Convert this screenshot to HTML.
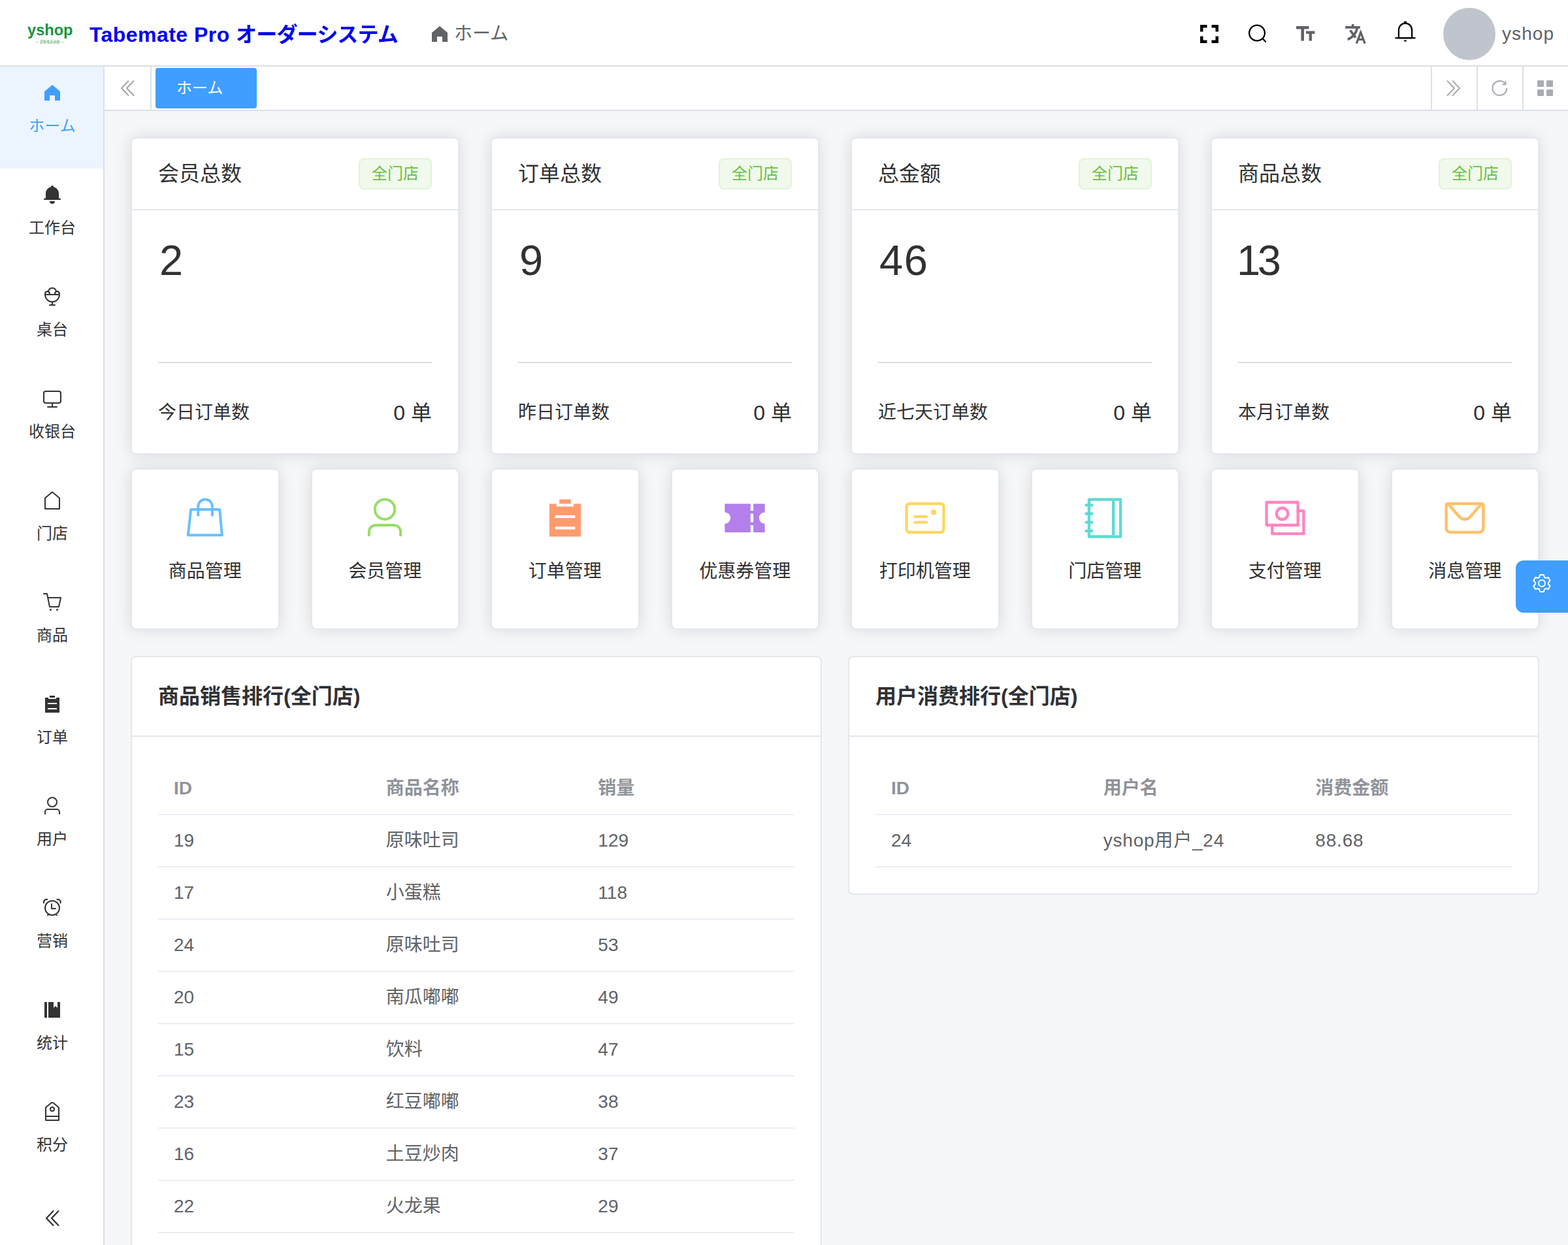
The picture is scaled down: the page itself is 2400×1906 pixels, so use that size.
<!DOCTYPE html>
<html lang="zh-CN">
<head>
<meta charset="utf-8">
<title>Tabemate Pro オーダーシステム</title>
<style>
*{box-sizing:border-box;margin:0;padding:0}
html,body{width:2400px;height:1906px;overflow:hidden}
body{position:relative;background:#f5f7f9;font-family:"Liberation Sans","Noto Sans CJK SC","Noto Sans CJK JP",sans-serif;color:#303133;-webkit-font-smoothing:antialiased}
svg{display:block}
.abs{position:absolute}
/* header */
#hdr{position:absolute;left:0;top:0;width:2400px;height:102px;background:#fff;border-bottom:2px solid #dcdfe6}
#logo{position:absolute;left:40px;top:28px;width:74px;height:44px;color:#17953f}
#logo .l1{position:absolute;left:1.700px;top:2.700px;font-size:24.500px;line-height:30px;font-weight:700;transform:scaleX(.964);transform-origin:0 0;white-space:nowrap}
#logo .l2{position:absolute;left:13.500px;top:33px;font-size:10.400px;line-height:12px;transform:scale(.5);transform-origin:0 0;white-space:nowrap;opacity:.85}
#title{position:absolute;left:137px;top:31px;font-size:32px;line-height:44px;font-weight:700;color:#0000ee;white-space:nowrap}
#crumb{position:absolute;left:657px;top:30px;height:44px;display:flex;align-items:center;color:#606266;font-size:28px;line-height:44px;white-space:nowrap}
#crumb svg{margin-right:6px}
.hi{position:absolute;top:0}
#avatar{position:absolute;left:2209px;top:12px;width:80px;height:80px;border-radius:50%;background:#c0c4cc}
#uname{position:absolute;left:2299px;top:30px;font-size:28px;line-height:44px;color:#606266;letter-spacing:1.100px}
/* sidebar */
#side{position:absolute;left:0;top:102px;width:160px;height:1804px;background:#fff;border-right:2px solid #dcdfe6}
.mi{position:absolute;left:0;width:158px;height:156px;color:#333}
.mi.on{background:#ecf5ff;color:#409eff}
.mi svg{position:absolute;left:64px;top:24px;width:32px;height:32px;fill:currentColor}
.mi span{position:absolute;left:1px;top:73px;width:158px;text-align:center;font-size:24px;line-height:36px}
/* tagbar */
#tags{position:absolute;left:160px;top:102px;width:2240px;height:68px;background:#fff;border-bottom:2px solid #dcdfe6}
.tb{position:absolute;top:0;height:66px;border-left:2px solid #dcdfe6}
#tab{position:absolute;left:78px;top:2px;width:155px;height:62px;border-radius:4px;background:#409eff;color:#fff;font-size:24px;line-height:62px;padding-left:32px}
/* cards */
.card{position:absolute;background:#fff;border:2px solid #e4e7ed;border-radius:8px;box-shadow:0 0 24px rgba(0,0,0,.12)}
.card.ns{box-shadow:none}
.c1{top:210px;width:503px;height:486px}
.c1 .hd{position:absolute;left:0;top:0;width:499px;height:110px;border-bottom:2px solid #e4e7ed}
.c1 .tt{position:absolute;left:40px;top:30px;font-size:32px;line-height:48px;color:#303133}
.c1 .tag{position:absolute;right:40px;top:30px;width:112px;height:48px;border:2px solid #e1f3d8;background:#f0f9eb;border-radius:8px;color:#67c23a;font-size:24px;line-height:44px;text-align:center}
.c1 .num{position:absolute;left:42px;top:147px;font-size:65px;line-height:80px;letter-spacing:1.500px;color:#303133}
.c1 .dv{position:absolute;left:40px;top:342px;width:419px;height:2px;background:#dcdfe6}
.c1 .ft{position:absolute;left:40px;right:40px;top:400px;font-size:28px;line-height:40px;color:#303133;display:flex;justify-content:space-between}
.c1 .ft .r{font-size:32px}
.c2{top:717px;width:227.500px;height:247px}
.c2 svg{position:absolute;left:76.750px;top:39px;width:70px;height:70px}
.c2 span{position:absolute;left:-20px;right:-20px;top:136px;text-align:center;font-size:28px;line-height:40px;color:#303133;white-space:nowrap}
.c3{top:1004px;width:1058px}
.c3 .hd{height:122px;border-bottom:2px solid #e4e7ed;padding:36px 40px;font-size:32px;line-height:48px;font-weight:700;color:#303133}
table{position:absolute;left:40px;top:161px;width:974px;border-collapse:collapse;table-layout:fixed;font-size:28px;color:#606266}
th,td{height:80px;padding:0 24px;text-align:left;border-bottom:2px solid #ebeef5;font-weight:400;line-height:46px}
th{color:#909399;font-weight:700}
.ls{letter-spacing:.8px}
#gear{position:absolute;left:2320px;top:858px;width:80px;height:80px;background:#409eff;border-radius:12px 0 0 12px}
#gear svg{position:absolute;left:24px;top:19px;width:32px;height:32px;fill:#fff}
</style>
</head>
<body>
<div id="hdr">
  <div id="logo"><div class="l1">yshop</div><div class="l2">— 意象电商系统 —</div></div>
  <div id="title"><span style="letter-spacing:.45px">Tabemate Pro </span><span style="letter-spacing:-.8px">オーダーシステム</span></div>
  <div id="crumb"><svg width="32" height="32" viewBox="0 0 1024 1024" fill="#606266"><path d="M512 128 128 447.936V896h255.936V640H640v256h255.936V447.936z"/></svg><span>ホーム</span></div>

  <svg class="abs" style="left:1837px;top:38px" width="28" height="28" viewBox="0 0 28 28" fill="none" stroke="#000" stroke-width="4.500"><path d="M2.250 10.500V2.250H10.500M17.500 2.250H25.750V10.500M25.750 17.500V25.750H17.500M10.500 25.750H2.250V17.500"/></svg>
  <svg class="abs" style="left:1908px;top:36px" width="32" height="32" viewBox="0 0 32 32" fill="none" stroke="#000" stroke-width="2.300" stroke-linecap="round"><circle cx="16" cy="14.500" r="11.900"/><path d="M24.600 23 29 27.800"/></svg>
  <svg class="abs" style="left:1980px;top:36px" width="36" height="32" viewBox="0 0 36 32" fill="#606266"><path d="M4 4.100h19.400v4.300h-7.400v18.100h-4.600V8.400H4zM19 11.500h13.500v4.300h-4.600v10.700h-4.300V15.800H19z"/></svg>
  <svg class="abs" style="left:2056px;top:34px" width="38" height="36" viewBox="0 0 38 36" fill="none" stroke="#606266" stroke-width="3.600"><path d="M3.100 7.900H25.800M14.600 3V8M21.300 9.500Q18.500 21.500 6.800 26.500M10.600 12.400 19 23.600"/><path d="M20.200 32.600 26.700 15.600 33.200 32.600M22.800 26.300H30.600" stroke-width="3.200" stroke-linejoin="miter" stroke-miterlimit="10"/></svg>
  <svg class="abs" style="left:2133px;top:30px" width="36" height="36" viewBox="0 0 1024 1024" fill="#000"><path d="M512 64a64 64 0 0 1 64 64v64H448v-64a64 64 0 0 1 64-64"/><path d="M256 768h512V448a256 256 0 1 0-512 0zm256-640a320 320 0 0 1 320 320v384H192V448a320 320 0 0 1 320-320"/><path d="M96 768h832q32 0 32 32t-32 32H96q-32 0-32-32t32-32m352 128h128a64 64 0 0 1-128 0"/></svg>
  <div id="avatar"></div>
  <div id="uname">yshop</div>
</div>
<div id="side">
<div class="mi on" style="top:0px"><svg viewBox="0 0 1024 1024"><path d="M512 128 128 447.936V896h255.936V640H640v256h255.936V447.936z"/></svg><span>ホーム</span></div>
<div class="mi" style="top:156px"><svg viewBox="0 0 1024 1024"><path d="M640 832a128 128 0 0 1-256 0zm192-64H134.4a38.4 38.4 0 0 1 0-76.8H192V448c0-154.88 110.08-284.16 256-313.6V128a64 64 0 1 1 128 0v6.4c145.92 29.44 256 158.72 256 313.6v243.2h57.6a38.4 38.4 0 0 1 0 76.8z"/></svg><span>工作台</span></div>
<div class="mi" style="top:312px"><svg viewBox="0 0 1024 1024"><path d="M128 416v-48a144 144 0 0 1 168.64-141.888 224.128 224.128 0 0 1 430.72 0A144 144 0 0 1 896 368v48a384 384 0 0 1-352 382.72V896h-64v-97.28A384 384 0 0 1 128 416m287.104-32.064h193.792a143.808 143.808 0 0 1 58.88-132.736 160.064 160.064 0 0 0-311.552 0 143.808 143.808 0 0 1 58.88 132.8zm-72.896 0a72 72 0 1 0-140.48 0h140.48zm339.584 0h140.416a72 72 0 1 0-140.48 0zM512 736a320 320 0 0 0 318.4-288.064H193.6A320 320 0 0 0 512 736M384 896.064h256a32 32 0 1 1 0 64H384a32 32 0 1 1 0-64"/></svg><span>桌台</span></div>
<div class="mi" style="top:468px"><svg viewBox="0 0 1024 1024"><path d="M544 768v128h192a32 32 0 1 1 0 64H288a32 32 0 1 1 0-64h192V768H192A128 128 0 0 1 64 640V256a128 128 0 0 1 128-128h640a128 128 0 0 1 128 128v384a128 128 0 0 1-128 128zM192 192a64 64 0 0 0-64 64v384a64 64 0 0 0 64 64h640a64 64 0 0 0 64-64V256a64 64 0 0 0-64-64z"/></svg><span>收银台</span></div>
<div class="mi" style="top:624px"><svg viewBox="0 0 1024 1024"><path d="M192 413.952V896h640V413.952L512 147.328zM139.52 374.208l351.936-293.312a32 32 0 0 1 40.96 0l352 293.312A32 32 0 0 1 896 398.784V928a32 32 0 0 1-32 32H160a32 32 0 0 1-32-32V398.848a32 32 0 0 1 11.52-24.64"/></svg><span>门店</span></div>
<div class="mi" style="top:780px"><svg viewBox="0 0 1024 1024"><path d="M432 928a48 48 0 1 1 0-96 48 48 0 0 1 0 96m320 0a48 48 0 1 1 0-96 48 48 0 0 1 0 96M96 128a32 32 0 0 1 0-64h160a32 32 0 0 1 31.36 25.728L320.64 256H928a32 32 0 0 1 31.296 38.72l-96 448A32 32 0 0 1 832 768H384a32 32 0 0 1-31.36-25.728L229.76 128zm314.24 576h395.904l82.304-384H333.44l76.8 384z"/></svg><span>商品</span></div>
<div class="mi" style="top:936px"><svg viewBox="0 0 1024 1024"><path d="M704 192h160v736H160V192h160v64h384zM288 512h448v-64H288zm0 256h448v-64H288zm96-576V96h256v96z"/></svg><span>订单</span></div>
<div class="mi" style="top:1092px"><svg viewBox="0 0 1024 1024"><path d="M512 512a192 192 0 1 0 0-384 192 192 0 0 0 0 384m0 64a256 256 0 1 1 0-512 256 256 0 0 1 0 512m320 320v-96a96 96 0 0 0-96-96H288a96 96 0 0 0-96 96v96a32 32 0 1 1-64 0v-96a160 160 0 0 1 160-160h448a160 160 0 0 1 160 160v96a32 32 0 1 1-64 0"/></svg><span>用户</span></div>
<div class="mi" style="top:1248px"><svg viewBox="0 0 1024 1024"><path d="M512 832a320 320 0 1 0 0-640 320 320 0 0 0 0 640m0 64a384 384 0 1 1 0-768 384 384 0 0 1 0 768M292.288 824l45.248 45.248-45.248 45.248-45.248-45.248zm439.424 0-45.248 45.248 45.248 45.248 45.248-45.248zM512 512h160a32 32 0 1 1 0 64H480a32 32 0 0 1-32-32V320a32 32 0 0 1 64 0zM90.496 312.256A160 160 0 0 1 312.32 90.496l-46.848 46.848a96 96 0 0 0-128 128L90.56 312.256zm835.264 0A160 160 0 0 0 704 90.496l46.848 46.848a96 96 0 0 1 128 128z"/></svg><span>营销</span></div>
<div class="mi" style="top:1404px"><svg viewBox="0 0 1024 1024"><path d="M576 128v288l96-96 96 96V128h128v768H320V128zm-448 0h128v768H128z"/></svg><span>统计</span></div>
<div class="mi" style="top:1560px"><svg viewBox="0 0 1024 1024"><path d="M224 704h576V318.336L552.512 115.84a64 64 0 0 0-81.024 0L224 318.336zm0 64v128h576V768zM593.024 66.304l259.2 212.096A32 32 0 0 1 864 303.168V928a32 32 0 0 1-32 32H192a32 32 0 0 1-32-32V303.168a32 32 0 0 1 11.712-24.768l259.2-212.096a128 128 0 0 1 162.112 0M512 448a64 64 0 1 0 0-128 64 64 0 0 0 0 128m0 64a128 128 0 1 1 0-256 128 128 0 0 1 0 256"/></svg><span>积分</span></div>
<svg class="abs" style="left:64px;top:1747px" width="32" height="32" viewBox="0 0 32 32" fill="none" stroke="#2b2b2b" stroke-width="2.100" stroke-linecap="round" stroke-linejoin="round"><path d="M17.500 5 7 16 17.500 27M25.500 5 15 16 25.500 27"/></svg>
</div>
<div id="tags">
  <svg class="abs" style="left:19px;top:17px" width="32" height="32" viewBox="0 0 32 32" fill="none" stroke="#a0a3ab" stroke-width="1.900" stroke-linecap="round" stroke-linejoin="round"><path d="M17.500 5 7 16 17.500 27M25.500 5 15 16 25.500 27"/></svg>
  <div class="tb" style="left:70px;width:2px"></div>
  <div id="tab">ホーム</div>
  <div class="tb" style="left:2030px;width:70px"><svg class="abs" style="left:17px;top:17px" width="32" height="32" viewBox="0 0 32 32" fill="none" stroke="#a8abb2" stroke-width="2" stroke-linecap="round" stroke-linejoin="round"><path d="M6.500 5 17 16 6.500 27M14.500 5 25 16 14.500 27"/></svg></div>
  <div class="tb" style="left:2100px;width:70px"><svg class="abs" style="left:17px;top:17px" width="32" height="32" viewBox="0 0 1024 1024" fill="#a8abb2"><path d="M784.512 230.272v-50.560a32 32 0 1 1 64 0v149.056a32 32 0 0 1-32 32H667.520a32 32 0 1 1 0-64h92.992A320 320 0 1 0 524.800 833.152a320 320 0 0 0 320-320h64a384 384 0 0 1-384 384 384 384 0 0 1-384-384 384 384 0 0 1 643.712-282.880z"/></svg></div>
  <div class="tb" style="left:2170px;width:70px"><svg class="abs" style="left:17px;top:17px" width="32" height="32" viewBox="0 0 1024 1024" fill="#a8abb2"><path d="M160 448a32 32 0 0 1-32-32V160.064a32 32 0 0 1 32-32h256a32 32 0 0 1 32 32V416a32 32 0 0 1-32 32zm448 0a32 32 0 0 1-32-32V160.064a32 32 0 0 1 32-32h255.936a32 32 0 0 1 32 32V416a32 32 0 0 1-32 32zM160 896a32 32 0 0 1-32-32V608a32 32 0 0 1 32-32h256a32 32 0 0 1 32 32v256a32 32 0 0 1-32 32zm448 0a32 32 0 0 1-32-32V608a32 32 0 0 1 32-32h255.936a32 32 0 0 1 32 32v256a32 32 0 0 1-32 32z"/></svg></div>
</div>
<div id="main">
<div class="card c1" style="left:200px"><div class="hd"><div class="tt">会员总数</div><div class="tag">全门店</div></div><div class="num">2</div><div class="dv"></div><div class="ft"><span>今日订单数</span><span class="r">0 单</span></div></div>
<div class="card c1" style="left:751px"><div class="hd"><div class="tt">订单总数</div><div class="tag">全门店</div></div><div class="num">9</div><div class="dv"></div><div class="ft"><span>昨日订单数</span><span class="r">0 单</span></div></div>
<div class="card c1" style="left:1302px"><div class="hd"><div class="tt">总金额</div><div class="tag">全门店</div></div><div class="num">46</div><div class="dv"></div><div class="ft"><span>近七天订单数</span><span class="r">0 单</span></div></div>
<div class="card c1" style="left:1853px"><div class="hd"><div class="tt">商品总数</div><div class="tag">全门店</div></div><div class="num" style="letter-spacing:-4.500px;margin-left:-4px">13</div><div class="dv"></div><div class="ft"><span>本月订单数</span><span class="r">0 单</span></div></div>
<div class="card c2" style="left:200px"><svg viewBox="0 0 70 70" fill="none" stroke-width="4" stroke-linecap="round" stroke-linejoin="round" stroke="#69c0ff"><path d="M13.200 22H57.200L60.900 61.300H8.800z"/><path d="M24.300 30.700V17.200a10.800 10.800 0 0 1 21.600 0V30.700"/></svg><span>商品管理</span></div>
<div class="card c2" style="left:475.5px"><svg viewBox="0 0 70 70" fill="none" stroke-width="4" stroke-linecap="round" stroke-linejoin="round" stroke="#95de64"><circle cx="35" cy="21.650" r="15.250"/><path d="M10.900 61.300V56a10.100 10.100 0 0 1 10.100-10.100h28a10.100 10.100 0 0 1 10.100 10.100v5.300"/></svg><span>会员管理</span></div>
<div class="card c2" style="left:751px"><svg viewBox="0 0 1024 1024" fill="#ff9c6e"><path d="M704 192h160v736H160V192h160v64h384zM288 512h448v-64H288zm0 256h448v-64H288zm96-576V96h256v96z"/></svg><span>订单管理</span></div>
<div class="card c2" style="left:1026.5px"><svg viewBox="0 0 1024 1024" fill="#b37feb"><path d="M640 832H64V640a128 128 0 1 0 0-256V192h576v160h64V192h256v192a128 128 0 1 0 0 256v192H704V672h-64zm0-416v192h64V416z"/></svg><span>优惠券管理</span></div>
<div class="card c2" style="left:1302px"><svg viewBox="0 0 1024 1024" fill="#ffd666"><path d="M160 224a32 32 0 0 0-32 32v512a32 32 0 0 0 32 32h704a32 32 0 0 0 32-32V256a32 32 0 0 0-32-32zm0-64h704a96 96 0 0 1 96 96v512a96 96 0 0 1-96 96H160a96 96 0 0 1-96-96V256a96 96 0 0 1 96-96"/><path d="M704 320a64 64 0 1 1 0 128 64 64 0 0 1 0-128M288 448h256q32 0 32 32t-32 32H288q-32 0-32-32t32-32m0 128h256q32 0 32 32t-32 32H288q-32 0-32-32t32-32"/></svg><span>打印机管理</span></div>
<div class="card c2" style="left:1577.5px"><svg viewBox="0 0 1024 1024" fill="#5cdbd3"><path d="M192 128v768h640V128zm-32-64h704a32 32 0 0 1 32 32v832a32 32 0 0 1-32 32H160a32 32 0 0 1-32-32V96a32 32 0 0 1 32-32"/><path d="M672 128h64v768h-64zM96 192h128q32 0 32 32t-32 32H96q-32 0-32-32t32-32m0 192h128q32 0 32 32t-32 32H96q-32 0-32-32t32-32m0 192h128q32 0 32 32t-32 32H96q-32 0-32-32t32-32m0 192h128q32 0 32 32t-32 32H96q-32 0-32-32t32-32"/></svg><span>门店管理</span></div>
<div class="card c2" style="left:1853px"><svg viewBox="0 0 1024 1024" fill="#ff85c0"><path d="M256 640v192h640V384H768v-64h150.976c14.272 0 19.456 1.472 24.64 4.288a29.056 29.056 0 0 1 12.16 12.096c2.752 5.184 4.224 10.368 4.224 24.64v493.952c0 14.272-1.472 19.456-4.288 24.64a29.056 29.056 0 0 1-12.096 12.160c-5.184 2.752-10.368 4.224-24.64 4.224H233.024c-14.272 0-19.456-1.472-24.64-4.288a29.056 29.056 0 0 1-12.16-12.096c-2.688-5.184-4.224-10.368-4.224-24.576V640z"/><path d="M768 192H128v448h640zm64-22.976v493.952c0 14.272-1.472 19.456-4.288 24.64a29.056 29.056 0 0 1-12.096 12.160c-5.184 2.752-10.368 4.224-24.64 4.224H105.024c-14.272 0-19.456-1.472-24.64-4.288a29.056 29.056 0 0 1-12.16-12.096C65.536 682.432 64 677.248 64 663.040V169.024c0-14.272 1.472-19.456 4.288-24.640a29.056 29.056 0 0 1 12.096-12.160C85.568 129.536 90.752 128 104.960 128h685.952c14.272 0 19.456 1.472 24.64 4.288a29.056 29.056 0 0 1 12.160 12.096c2.752 5.184 4.224 10.368 4.224 24.640z"/><path d="M448 576a160 160 0 1 1 0-320 160 160 0 0 1 0 320m0-64a96 96 0 1 0 0-192 96 96 0 0 0 0 192"/></svg><span>支付管理</span></div>
<div class="card c2" style="left:2128.5px"><svg viewBox="0 0 1024 1024" fill="#ffc069"><path d="M128 224v512a64 64 0 0 0 64 64h640a64 64 0 0 0 64-64V224zm0-64h768a64 64 0 0 1 64 64v512a128 128 0 0 1-128 128H192A128 128 0 0 1 64 736V224a64 64 0 0 1 64-64"/><path d="M904 224 656.512 506.880a192 192 0 0 1-289.024 0L120 224zm-698.944 0 210.560 240.704a128 128 0 0 0 192.704 0L818.944 224z"/></svg><span>消息管理</span></div>
<div class="card ns c3" style="left:200px;height:1000px"><div class="hd">商品销售排行(全门店)</div><table><tr><th>ID</th><th>商品名称</th><th>销量</th></tr><tr><td>19</td><td>原味吐司</td><td>129</td></tr><tr><td>17</td><td>小蛋糕</td><td>118</td></tr><tr><td>24</td><td>原味吐司</td><td>53</td></tr><tr><td>20</td><td>南瓜嘟嘟</td><td>49</td></tr><tr><td>15</td><td>饮料</td><td>47</td></tr><tr><td>23</td><td>红豆嘟嘟</td><td>38</td></tr><tr><td>16</td><td>土豆炒肉</td><td>37</td></tr><tr><td>22</td><td>火龙果</td><td>29</td></tr><tr><td>18</td><td>提拉米苏</td><td>21</td></tr></table></div>
<div class="card ns c3" style="left:1298px;height:366px"><div class="hd">用户消费排行(全门店)</div><table><tr><th>ID</th><th>用户名</th><th>消费金额</th></tr><tr><td>24</td><td class="ls">yshop用户_24</td><td class="ls">88.68</td></tr></table></div>
</div>
<div id="gear"><svg viewBox="0 0 1024 1024"><path d="M600.704 64a32 32 0 0 1 30.464 22.208l35.200 109.376c14.784 7.232 28.928 15.360 42.432 24.512l112.384-24.192a32 32 0 0 1 34.432 15.360L944.320 364.800a32 32 0 0 1-4.032 37.504l-77.120 85.120a357.120 357.120 0 0 1 0 49.024l77.120 85.248a32 32 0 0 1 4.032 37.504l-88.704 153.600a32 32 0 0 1-34.432 15.296L708.800 803.904c-13.440 9.088-27.648 17.280-42.368 24.512l-35.264 109.376A32 32 0 0 1 600.704 960H423.296a32 32 0 0 1-30.464-22.208L357.696 828.480a351.616 351.616 0 0 1-42.560-24.640l-112.320 24.256a32 32 0 0 1-34.432-15.360L79.680 659.200a32 32 0 0 1 4.032-37.504l77.120-85.248a357.120 357.120 0 0 1 0-48.896l-77.120-85.248A32 32 0 0 1 79.680 364.800l88.704-153.600a32 32 0 0 1 34.432-15.296l112.320 24.256c13.568-9.152 27.776-17.408 42.560-24.640l35.200-109.312A32 32 0 0 1 423.232 64H600.640zm-23.424 64H446.720l-36.352 113.088-24.512 11.968a294.113 294.113 0 0 0-34.816 20.096l-22.656 15.360-116.224-25.088-65.280 113.152 79.680 88.192-1.920 27.136a293.120 293.120 0 0 0 0 40.192l1.920 27.136-79.808 88.192 65.344 113.152 116.224-25.024 22.656 15.296a294.113 294.113 0 0 0 34.816 20.096l24.512 11.968L446.720 896h130.688l36.480-113.152 24.448-11.904a288.282 288.282 0 0 0 34.752-20.096l22.592-15.296 116.288 25.024 65.280-113.152-79.744-88.192 1.920-27.136a293.120 293.120 0 0 0 0-40.256l-1.920-27.136 79.808-88.128-65.344-113.152-116.288 24.960-22.592-15.232a287.616 287.616 0 0 0-34.752-20.096l-24.448-11.904L577.344 128zM512 320a192 192 0 1 1 0 384 192 192 0 0 1 0-384m0 64a128 128 0 1 0 0 256 128 128 0 0 0 0-256"/></svg></div>
</body>
</html>
